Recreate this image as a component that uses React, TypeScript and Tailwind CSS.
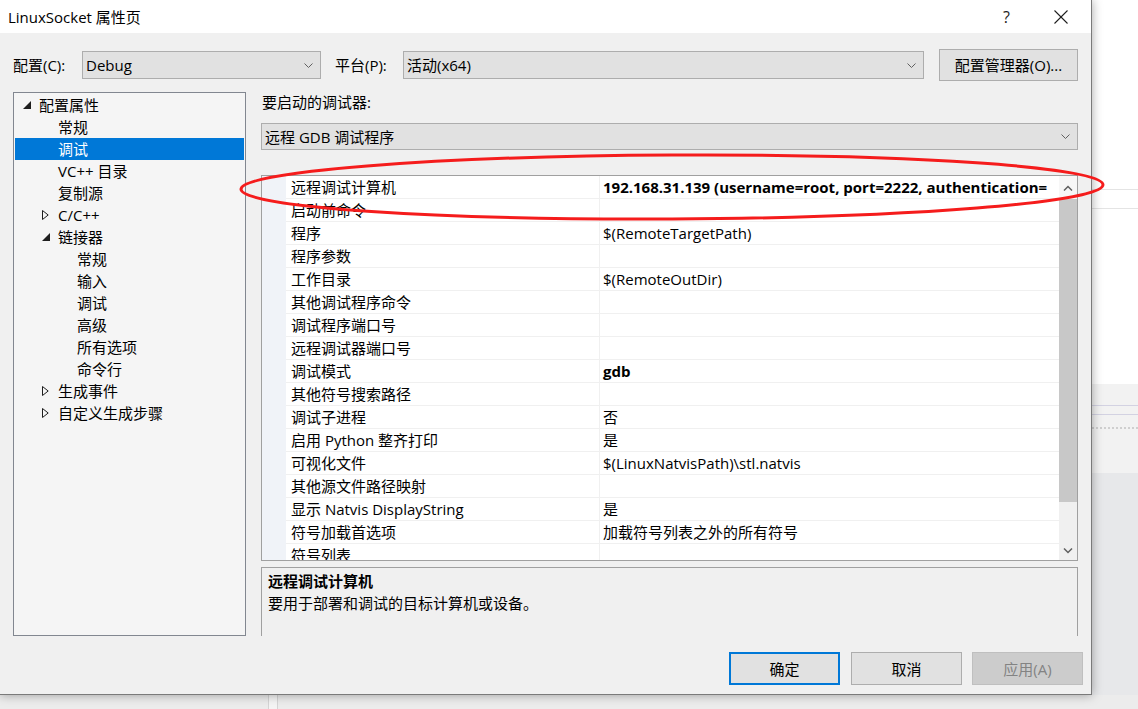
import React from "react";

type TreeItem = { label: string; level: 1 | 2 | 3; arrow?: "open" | "closed"; selected?: boolean };

const tree: TreeItem[] = [
  { label: "配置属性", level: 1, arrow: "open" },
  { label: "常规", level: 2 },
  { label: "调试", level: 2, selected: true },
  { label: "VC++ 目录", level: 2 },
  { label: "复制源", level: 2 },
  { label: "C/C++", level: 2, arrow: "closed" },
  { label: "链接器", level: 2, arrow: "open" },
  { label: "常规", level: 3 },
  { label: "输入", level: 3 },
  { label: "调试", level: 3 },
  { label: "高级", level: 3 },
  { label: "所有选项", level: 3 },
  { label: "命令行", level: 3 },
  { label: "生成事件", level: 2, arrow: "closed" },
  { label: "自定义生成步骤", level: 2, arrow: "closed" },
];

const props: [string, string, boolean?][] = [
  ["远程调试计算机", "192.168.31.139 (username=root, port=2222, authentication=", true],
  ["启动前命令", ""],
  ["程序", "$(RemoteTargetPath)"],
  ["程序参数", ""],
  ["工作目录", "$(RemoteOutDir)"],
  ["其他调试程序命令", ""],
  ["调试程序端口号", ""],
  ["远程调试器端口号", ""],
  ["调试模式", "gdb", true],
  ["其他符号搜索路径", ""],
  ["调试子进程", "否"],
  ["启用 Python 整齐打印", "是"],
  ["可视化文件", "$(LinuxNatvisPath)\\stl.natvis"],
  ["其他源文件路径映射", ""],
  ["显示 Natvis DisplayString", "是"],
  ["符号加载首选项", "加载符号列表之外的所有符号"],
  ["符号列表", ""],
];

function ChevronDown() {
  return (
    <svg width="9" height="5" viewBox="0 0 9 5" className="shrink-0">
      <polyline points="0.5,0.5 4.5,4.5 8.5,0.5" fill="none" stroke="#606060" strokeWidth="1" />
    </svg>
  );
}

function OpenArrow() {
  return (
    <svg width="8" height="8" viewBox="0 0 8 8">
      <polygon points="8,0 8,8 0,8" fill="#1e1e1e" />
    </svg>
  );
}

function ClosedArrow() {
  return (
    <svg width="7" height="10" viewBox="0 0 7 10">
      <polygon points="0.5,0.5 6.2,5 0.5,9.5" fill="none" stroke="#1e1e1e" strokeWidth="1" />
    </svg>
  );
}

function Dropdown({ text, className }: { text: string; className: string }) {
  return (
    <div
      className={`flex items-center justify-between border border-[#adadad] bg-[#e1e1e1] pl-[3px] pr-[7px] text-[15px] text-black ${className}`}
    >
      <span className="leading-[20px]">{text}</span>
      <ChevronDown />
    </div>
  );
}

export default function App() {
  return (
    <div className="relative flex h-[709px] w-[1138px] flex-col overflow-hidden bg-[#e7e8ea] font-['Open_Sans','Noto_Sans_CJK_SC',sans-serif] text-[15px] text-black">
      <div className="flex h-[695px]">
        {/* Dialog */}
        <div className="relative z-10 flex h-[695px] w-[1092px] shrink-0 flex-col border-r border-b border-[#7a7a7a] bg-[#f0f0f0] shadow-[0_0_10px_rgba(0,0,0,0.35)]">
          {/* Title bar */}
          <div className="flex h-[33px] shrink-0 items-center bg-white pl-[8px]">
            <span className="leading-[20px]">LinuxSocket 属性页</span>
            <div className="ml-auto flex items-center">
              <span className="mr-[44px] text-[16px] leading-[20px] text-[#1e1e1e]">?</span>
              <svg width="14" height="14" viewBox="0 0 14 14" className="mr-[23px]">
                <line x1="0.5" y1="0.5" x2="13.5" y2="13.5" stroke="#1e1e1e" strokeWidth="1.1" />
                <line x1="13.5" y1="0.5" x2="0.5" y2="13.5" stroke="#1e1e1e" strokeWidth="1.1" />
              </svg>
            </div>
          </div>

          {/* Config row */}
          <div className="mt-[16px] flex h-[32px] shrink-0 items-center pl-[13px]">
            <span className="w-[69px] leading-[20px]">配置(C):</span>
            <Dropdown text="Debug" className="h-[28px] w-[239px]" />
            <span className="ml-[14px] w-[68px] leading-[20px]">平台(P):</span>
            <Dropdown text="活动(x64)" className="h-[28px] w-[521px]" />
            <div className="ml-[15px] flex h-[32px] w-[139px] items-center justify-center border border-[#adadad] bg-[#e1e1e1]">
              <span className="leading-[20px]">配置管理器(O)...</span>
            </div>
          </div>

          {/* Main area */}
          <div className="mt-[11px] flex h-[544px] shrink-0 pl-[13px]">
            {/* Tree */}
            <div className="flex h-[544px] w-[233px] flex-col border border-[#828790] bg-[#f5f5f5] pt-[1px]">
              {tree.map((t, i) => (
                <div
                  key={i}
                  className={`mx-[1px] flex h-[22px] items-center ${
                    t.selected ? "bg-[#0078d7] text-white" : ""
                  } ${t.level === 1 ? "pl-[8px]" : t.level === 2 ? "pl-[27px]" : "pl-[62px]"}`}
                >
                  {t.level < 3 && (
                    <span className="flex w-[16px] shrink-0 items-center">
                      {t.arrow === "open" && <OpenArrow />}
                      {t.arrow === "closed" && <ClosedArrow />}
                    </span>
                  )}
                  <span className="whitespace-nowrap leading-[20px]">{t.label}</span>
                </div>
              ))}
            </div>

            {/* Right column */}
            <div className="ml-[15px] flex w-[817px] flex-col">
              <div className="h-[20px] pl-[1px] leading-[20px]">要启动的调试器:</div>
              <Dropdown text="远程 GDB 调试程序" className="mt-[11px] h-[27px] w-[817px]" />

              {/* Property grid */}
              <div className="mt-[25px] flex h-[386px] overflow-hidden border border-[#a0a0a0] bg-white">
                <div className="flex w-[797px] flex-col overflow-hidden">
                  {props.map(([name, value, bold], i) => (
                    <div key={i} className="flex h-[23px] shrink-0">
                      <div className="w-[24px] shrink-0 bg-[#f0f3f8]" />
                      <div className="flex w-[314px] shrink-0 items-center border-r border-b border-[#f0f0f0] pl-[5px]">
                        <span className="whitespace-nowrap leading-[20px]">{name}</span>
                      </div>
                      <div className="flex w-[459px] shrink-0 items-center overflow-hidden border-b border-[#f0f0f0] pl-[3px]">
                        <span className={`whitespace-nowrap leading-[20px] ${bold ? "font-bold" : ""}`}>{value}</span>
                      </div>
                    </div>
                  ))}
                </div>
                {/* Scrollbar */}
                <div className="flex w-[18px] shrink-0 flex-col bg-[#f0f0f0]">
                  <div className="flex h-[23px] shrink-0 items-center justify-center bg-[#f7f7f7]">
                    <svg width="10" height="6" viewBox="0 0 10 6">
                      <polyline points="1,5.5 5,1.5 9,5.5" fill="none" stroke="#606060" strokeWidth="1.5" />
                    </svg>
                  </div>
                  <div className="h-[303px] shrink-0 bg-[#c8c8c8]" />
                  <div className="flex flex-1 items-end justify-center pb-[6px]">
                    <svg width="10" height="6" viewBox="0 0 10 6">
                      <polyline points="1,0.5 5,4.5 9,0.5" fill="none" stroke="#606060" strokeWidth="1.5" />
                    </svg>
                  </div>
                </div>
              </div>

              {/* Description */}
              <div className="mt-[6px] flex h-[69px] flex-col border-t border-r border-l border-[#a0a0a0] pt-[2px] pl-[6px]">
                <div className="h-[22px] font-bold leading-[22px]">远程调试计算机</div>
                <div className="h-[22px] leading-[22px]">要用于部署和调试的目标计算机或设备。</div>
              </div>
            </div>
          </div>

          {/* Buttons */}
          <div className="mt-[16px] flex h-[33px] shrink-0 pl-[729px]">
            <div className="flex h-[33px] w-[111px] items-center justify-center border-2 border-[#0078d7] bg-[#e1e1e1]">
              <span className="leading-[20px]">确定</span>
            </div>
            <div className="ml-[11px] flex h-[33px] w-[111px] items-center justify-center border border-[#adadad] bg-[#e1e1e1]">
              <span className="leading-[20px]">取消</span>
            </div>
            <div className="ml-[10px] flex h-[33px] w-[111px] items-center justify-center border border-[#bfbfbf] bg-[#cccccc] text-[#838383]">
              <span className="leading-[20px]">应用(A)</span>
            </div>
          </div>
        </div>

        {/* Background app to the right */}
        <div className="flex w-[46px] flex-col">
          <div className="h-[189px] bg-white" />
          <div className="h-[1px] bg-[#e4e4e4]" />
          <div className="h-[18px] bg-white" />
          <div className="h-[1px] bg-[#e4e4e4]" />
          <div className="h-[175px] bg-white" />
          <div className="flex h-[89px] flex-col bg-[#f2f2f2]">
            <div className="h-[21px]" />
            <div className="h-[1px] bg-[#d3d2e2]" />
            <div className="h-[8px]" />
            <div className="h-[1px] bg-[#d3d2e2]" />
            <div className="h-[12px]" />
            <div className="h-[2px] border-t-2 border-dotted border-[#cfcfcf]" />
          </div>
          <div className="flex-1 bg-[#e7e8ea]" />
        </div>
      </div>

      {/* Bottom strip behind dialog */}
      <div className="flex h-[14px] bg-[#ececec]">
        <div className="w-[268px]" />
        <div className="w-[1px] bg-[#d4d4d4]" />
        <div className="w-[8px] bg-[#f4f4f4]" />
        <div className="w-[1px] bg-[#d4d4d4]" />
        <div className="flex-1" />
      </div>

      {/* Red annotation ellipse */}
      <svg
        className="pointer-events-none absolute top-0 left-0 z-20"
        width="1138"
        height="709"
        viewBox="0 0 1138 709"
      >
        <ellipse
          cx="672"
          cy="187"
          rx="431"
          ry="32"
          transform="rotate(-0.3 672 187)"
          fill="none"
          stroke="#f51c1c"
          strokeWidth="3"
        />
      </svg>
    </div>
  );
}
